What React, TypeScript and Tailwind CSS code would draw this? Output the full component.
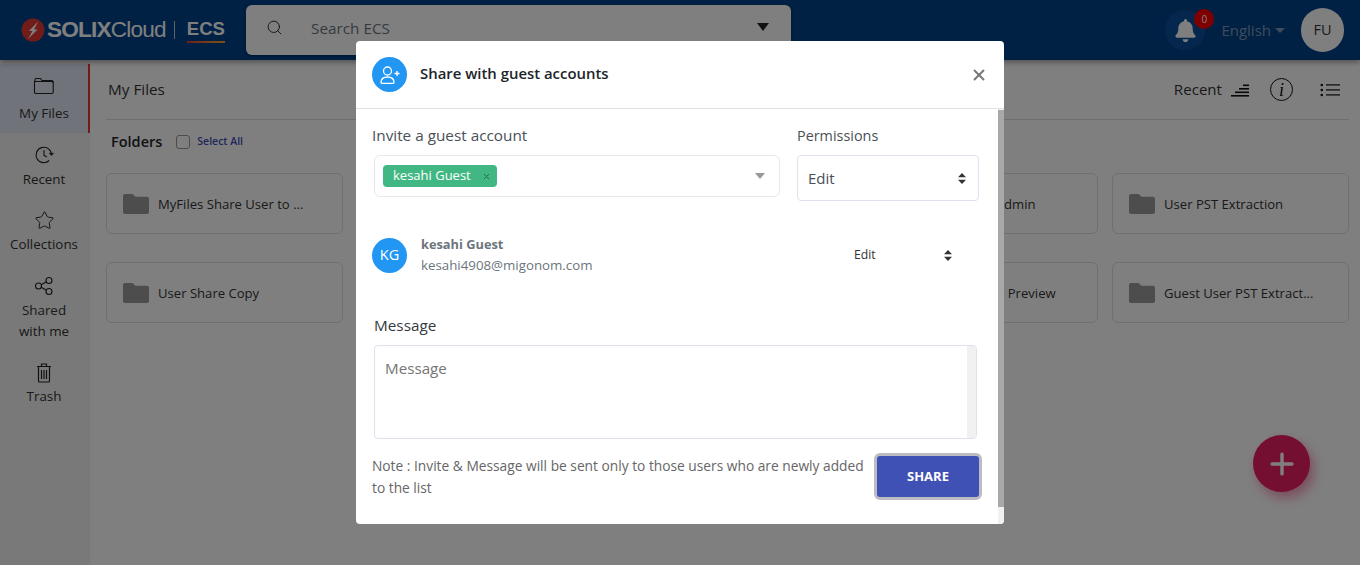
import React from 'react'
import { Search, Star, X, Plus } from 'lucide-react'
import { FaBell } from 'react-icons/fa'

const navItems = [
  { label: 'My Files', icon: 'folder', active: true },
  { label: 'Recent', icon: 'recent' },
  { label: 'Collections', icon: 'star' },
  { label: 'Shared with me', icon: 'share' },
  { label: 'Trash', icon: 'trash' },
]

const folders = [
  'MyFiles Share User to ...',
  'Guest Share Folder',
  'Guest Share Copy',
  'Guest Access Admin',
  'User PST Extraction',
  'User Share Copy',
  'User Share Preview',
  'Guest Copy Preview',
  'Guest User File Preview',
  'Guest User PST Extract...',
]

function NavIcon({ name }: { name: string }) {
  if (name === 'folder') {
    return (
      <svg width="22" height="18" viewBox="0 0 22 18" fill="none" stroke="#222" strokeWidth="1.1">
        <path d="M2 4V2.500c0-.6.400-1 1-1h4.500l1.500 2h10c.6 0 1 .4 1 1V6" />
        <path d="M1.500 4.500h17.500c.7 0 1.200.5 1.200 1.200v9.600c0 .7-.5 1.200-1.200 1.200H2.700c-.7 0-1.200-.5-1.200-1.200z" />
      </svg>
    )
  }
  if (name === 'recent') {
    return (
      <svg width="20" height="20" viewBox="0 0 20 20" fill="none" stroke="#222" strokeWidth="1.100">
        <path d="M17.500 9.500a7.700 7.700 0 1 0-2.300 6" />
        <path d="M15.500 8l2 2 2-2" />
        <path d="M10 5v5.500l3 1.500" />
      </svg>
    )
  }
  if (name === 'star') return <Star size={21} strokeWidth={1.1} color="#222" />
  if (name === 'share') {
    return (
      <svg width="20" height="20" viewBox="0 0 20 20" fill="none" stroke="#222" strokeWidth="1.100">
        <circle cx="4.500" cy="10" r="3" />
        <circle cx="15" cy="4.500" r="3" />
        <circle cx="15" cy="15.500" r="3" />
        <path d="M7.200 8.700l5.200-2.900M7.200 11.300l5.200 2.900" />
      </svg>
    )
  }
  return (
    <svg width="18" height="21" viewBox="0 0 18 21" fill="none" stroke="#222" strokeWidth="1.200">
      <path d="M2 4.500h14M6.500 4.500V2h5v2.500M3.500 4.500V19c0 .6.400 1 1 1h9c.6 0 1-.4 1-1V4.500" />
      <path d="M6.500 8v9M9 8v9M11.500 8v9" />
    </svg>
  )
}

function FolderIcon() {
  return (
    <svg width="26" height="20" viewBox="0 0 26 20" fill="#9b9b9b" className="shrink-0">
      <path d="M0 2c0-1.100.9-2 2-2h7.500l3 2.800H24c1.100 0 2 .9 2 2V18c0 1.100-.9 2-2 2H2c-1.100 0-2-.9-2-2z" />
    </svg>
  )
}

function UpDown() {
  return (
    <svg width="8" height="11" viewBox="0 0 8 11" fill="#333">
      <path d="M4 0l4 4.200H0zM4 11L0 6.800h8z" />
    </svg>
  )
}

export default function App() {
  return (
    <div className="relative h-[565px] w-[1360px] overflow-hidden bg-white text-[#212529]" style={{ fontFamily: '"Open Sans", sans-serif' }}>
      <header className="relative z-10 flex h-[60px] items-center bg-[#004288] pl-[21px] pr-[16px] shadow-[0_2px_6px_rgba(0,0,0,0.4)]">
        <div className="flex w-[225px] items-center">
          <svg width="24" height="24" viewBox="0 0 24 24" className="shrink-0">
            <circle cx="12" cy="12" r="11.500" fill="#e53935" />
            <path d="M17 3.500L8 13h3.500L7 21l9.500-9.500H13z" fill="#fff" />
          </svg>
          <span className="ml-[2px] text-[22.600px] font-bold tracking-[-0.8px] text-white" style={{ fontFamily: '"Liberation Sans", sans-serif' }}>SOLIX</span>
          <span className="text-[22.600px] tracking-[-0.8px] text-white" style={{ fontFamily: '"Liberation Sans", sans-serif' }}>Cloud</span>
          <span className="ml-[8px] h-[18px] w-px bg-[#b9c4d2]" />
          <div className="ml-[12px] flex translate-y-[1px] flex-col">
            <span className="text-[18.500px] leading-[22px] font-bold text-white" style={{ fontFamily: '"Liberation Sans", sans-serif' }}>ECS</span>
            <span className="mt-[1px] h-[2px] bg-gradient-to-r from-[#e53935] to-[#f5a623]" />
          </div>
        </div>
        <div className="flex h-[50px] w-[545px] items-center rounded-[6px] bg-white pl-[20px] pr-[22px] shadow-[0_1px_3px_rgba(0,0,0,0.4)]">
          <Search className="-translate-y-[3px]" size={17} strokeWidth={1.4} color="#333" />
          <span className="ml-[28px] flex-1 -translate-y-[2px] text-[15.300px] text-[#6c757d]">Search ECS</span>
          <svg className="-translate-y-[3px]" width="12" height="8" viewBox="0 0 12 8" fill="#222"><path d="M0 0h12L6 8z" /></svg>
        </div>
        <div className="ml-auto flex items-center">
          <div className="relative flex h-[40px] w-[40px] items-center justify-center rounded-full bg-[#0a4f9c]">
            <FaBell size={23} color="#fff" />
            <span className="absolute -right-[9px] -top-[1px] flex h-[20px] w-[20px] items-center justify-center rounded-full bg-[#ff0000] text-[10px] text-white">0</span>
          </div>
          <span className="ml-[16px] text-[15px] text-[#7f97b8]">English</span>
          <svg className="ml-[4px]" width="10" height="5" viewBox="0 0 10 5" fill="#7f97b8"><path d="M0 0h10L5 5z" /></svg>
          <div className="ml-[16px] flex h-[44px] w-[43px] items-center justify-center rounded-full bg-white text-[14.500px] text-[#333]">FU</div>
        </div>
      </header>

      <div className="flex h-[505px]">
        <aside className="flex w-[90px] shrink-0 flex-col bg-[#f3f3f3] pt-[4px]">
          {navItems.map(item => (
            <div
              key={item.label}
              className={item.active
                ? 'flex flex-col items-center gap-[6px] border-r-2 border-[#e53935] bg-[#e0e6f4] pl-[9px] pr-[9px] pt-[11px] pb-[9px]'
                : 'flex flex-col items-center gap-[2.500px] pl-[9px] pr-[11px] pt-[11px] pb-[9px]'}
            >
              <div className="flex h-[22px] items-center justify-center"><NavIcon name={item.icon} /></div>
              <span className="w-[70px] text-center text-[13.400px] leading-[21px] text-[#333]">{item.label}</span>
            </div>
          ))}
        </aside>

        <main className="flex-1 pl-[16px] pr-[11px]">
          <div className="flex h-[60px] items-center border-b border-[#dedede] pl-[2px] pr-[9px]">
            <span className="text-[15.300px] text-[#333]">My Files</span>
            <span className="ml-auto text-[15.100px] text-[#333]">Recent</span>
            <svg className="ml-[9px]" width="18" height="14" viewBox="0 0 18 14" fill="#111">
              <rect y="12" width="18" height="1.600" /><rect x="4" y="8.500" width="14" height="1.600" /><rect x="8" y="5" width="10" height="1.600" /><rect x="12" y="1.500" width="6" height="1.600" />
            </svg>
            <div className="ml-[21px] flex h-[23px] w-[23px] items-center justify-center rounded-full border-[1.500px] border-[#111] text-[18px] italic leading-none text-[#111]" style={{ fontFamily: '"Liberation Serif", serif' }}>i</div>
            <svg className="ml-[27px]" width="20" height="14" viewBox="0 0 20 14" fill="#111">
              <circle cx="1.800" cy="2" r="1.300" /><circle cx="1.800" cy="7" r="1.300" /><circle cx="1.800" cy="12" r="1.300" />
              <rect x="6" y="1.300" width="14" height="1.200" /><rect x="6" y="6.300" width="14" height="1.200" /><rect x="6" y="11.300" width="14" height="1.200" />
            </svg>
          </div>
          <div className="flex items-center pl-[5px] pt-[11px]">
            <span className="text-[14.500px] font-semibold text-[#212529]">Folders</span>
            <span className="ml-[14px] h-[14px] w-[14px] rounded-[3px] border border-[#999] bg-white" />
            <span className="ml-[7px] text-[10.500px] font-semibold text-[#3f51b5]">Select All</span>
          </div>
          <div className="mt-[20px] grid grid-cols-5 gap-x-[14.500px] gap-y-[27.500px]">
            {folders.map(name => (
              <div key={name} className="flex h-[61.500px] items-center gap-[9px] rounded-[6px] border border-[#dedede] pl-[16px]">
                <FolderIcon />
                <span className="truncate pt-[3px] text-[13.100px] text-[#333]">{name}</span>
              </div>
            ))}
          </div>
        </main>
      </div>

      <button className="absolute left-[1253px] top-[435px] flex h-[57px] w-[57px] items-center justify-center rounded-full bg-[#e91e63] shadow-[4px_6px_12px_rgba(233,30,99,0.45)]">
        <Plus size={34} strokeWidth={2.4} color="#fff" />
      </button>

      <div className="absolute inset-0 z-20 bg-black/50" />

      <div className="absolute left-[356px] top-[41px] z-30 flex h-[483px] w-[648px] flex-col overflow-hidden rounded-[4px] bg-white">
        <div className="flex h-[68px] shrink-0 items-center border-b border-[#dee2e6] pb-[2px] pl-[16px] pr-[16px]">
          <div className="flex h-[35px] w-[35px] translate-y-[1px] items-center justify-center rounded-full bg-[#2196f3]">
            <svg width="22" height="20" viewBox="0 0 22 20" fill="none" stroke="#fff" strokeWidth="1.300">
              <circle cx="8.500" cy="6" r="4" />
              <path d="M2 17.500c0-4 3-5.500 6.500-5.500s6.500 1.500 6.500 5.500c0 .5-.3.8-.8.8H2.800c-.5 0-.8-.3-.8-.8z" />
              <path d="M15.500 8.500h5M18 6v5" />
            </svg>
          </div>
          <span className="ml-[13px] text-[14.900px] font-semibold text-[#212529]">Share with guest accounts</span>
          <X className="ml-auto translate-y-[1px]" size={18} strokeWidth={2.6} color="#777" />
        </div>

        <div className="flex min-h-0 flex-1">
          <div className="flex-1 pl-[16px] pr-[16px]">
            <div className="flex pt-[16px]">
              <div className="w-[408px]">
                <div className="text-[15.300px] leading-[21px] text-[#495057]">Invite a guest account</div>
                <div className="ml-[2px] mt-[9px] flex h-[42px] items-center justify-between rounded-[6px] border border-[#e8e8e8] pl-[8px] pr-[14px]">
                  <div className="flex h-[22px] w-[114px] items-center justify-between rounded-[4px] bg-[#41b883] pl-[10px] pr-[6px] text-[13px] font-medium text-white">
                    kesahi Guest
                    <X size={9} strokeWidth={2.6} color="#266d4d" />
                  </div>
                  <svg width="10" height="6" viewBox="0 0 10 6" fill="#999"><path d="M0 0h10L5 6z" /></svg>
                </div>
              </div>
              <div className="ml-[17px] w-[182px]">
                <div className="text-[14.400px] leading-[21px] text-[#495057]">Permissions</div>
                <div className="mt-[9px] flex h-[46px] items-center justify-between rounded-[4px] border border-[#e0e0ee] pl-[10px] pr-[12px] text-[15px] text-[#495057]">
                  Edit
                  <UpDown />
                </div>
              </div>
            </div>

            <div className="mt-[33px] flex items-center">
              <div className="flex h-[35px] w-[35px] items-center justify-center rounded-full bg-[#2196f3] text-[14.500px] text-white">KG</div>
              <div className="ml-[14px] w-[433px]">
                <div className="text-[12.800px] leading-[21px] font-bold text-[#6c757d]">kesahi Guest</div>
                <div className="text-[13.300px] leading-[21px] text-[#6c757d]">kesahi4908@migonom.com</div>
              </div>
              <span className="text-[12.200px] text-[#333]">Edit</span>
              <span className="ml-[68px]"><UpDown /></span>
            </div>

            <div className="ml-[2px] mt-[39px] text-[15.300px] leading-[21px] text-[#343a40]">Message</div>
            <div className="ml-[2px] mt-[9px] flex h-[94px] w-[603px] overflow-hidden rounded-[4px] border border-[#e0e0ee]">
              <span className="flex-1 pl-[10px] pt-[12px] text-[15.200px] leading-[21px] text-[#757575]">Message</span>
              <span className="w-[9px] bg-[#f1f1f1]" />
            </div>

            <div className="mt-[15px] flex items-start">
              <p className="w-[497px] shrink-0 pt-[1px] text-[13.750px] leading-[22px] text-[#666]">Note : Invite &amp; Message will be sent only to those users who are newly added to the list</p>
              <button className="-mt-[1px] ml-[5px] h-[47px] w-[108px] shrink-0 rounded-[6px] border-[3px] border-[#bbbcc4] bg-[#3f51b5] text-[13px] font-bold text-white">SHARE</button>
            </div>
          </div>

          <div className="flex w-[9px] shrink-0 flex-col bg-[#f1f1f1]">
            <div className="mt-[1px] h-[397px] bg-[#a8a8a8]" />
          </div>
        </div>
      </div>
    </div>
  )
}
